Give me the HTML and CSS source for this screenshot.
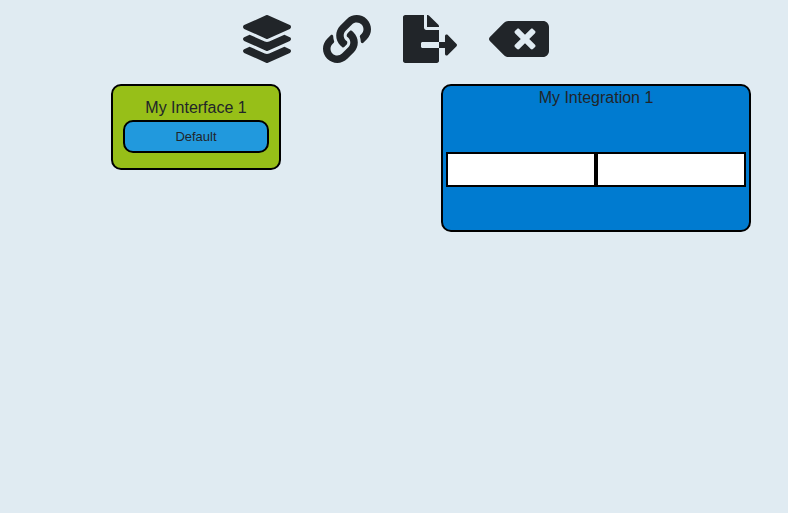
FILE: index.html
```html
<!DOCTYPE html>
<html lang="en">
<head>
<meta charset="utf-8">
<title>Integration editor</title>
<link rel="stylesheet" href="styles.css">
</head>
<body>
<nav class="toolbar">
  <svg class="icon" viewBox="0 0 512 512"><path d="M12.41 148.02l232.94 105.67c6.8 3.09 14.49 3.09 21.29 0l232.94-105.67c16.55-7.51 16.55-32.52 0-40.03L266.65 2.31a25.607 25.607 0 0 0-21.29 0L12.41 107.98c-16.55 7.51-16.55 32.53 0 40.04zm487.18 88.28l-58.09-26.33-161.64 73.27c-7.56 3.43-15.59 5.17-23.86 5.17s-16.29-1.74-23.86-5.17L70.51 209.97l-58.1 26.33c-16.55 7.5-16.55 32.5 0 40l232.94 105.59c6.8 3.08 14.49 3.08 21.29 0L499.59 276.3c16.55-7.5 16.55-32.5 0-40zm0 127.8l-57.87-26.23-161.86 73.37c-7.56 3.43-15.59 5.17-23.86 5.17s-16.29-1.74-23.86-5.17L70.29 337.87 12.41 364.1c-16.55 7.5-16.55 32.5 0 40l232.94 105.59c6.8 3.08 14.49 3.08 21.29 0L499.59 404.1c16.55-7.5 16.55-32.5 0-40z"/></svg>
  <svg class="icon" viewBox="0 0 512 512"><path d="M326.612 185.391c59.747 59.809 58.927 155.698.36 214.59-.11.12-.24.25-.36.37l-67.2 67.2c-59.27 59.27-155.699 59.262-214.96 0-59.27-59.26-59.27-155.7 0-214.96l37.106-37.106c9.84-9.84 26.786-3.3 27.294 10.606.648 17.722 3.826 35.527 9.69 52.721 1.986 5.822.567 12.262-3.783 16.612l-13.087 13.087c-28.026 28.026-28.905 73.66-1.155 101.96 28.024 28.579 74.086 28.749 102.325.51l67.2-67.19c28.191-28.191 28.073-73.757 0-101.83-3.701-3.694-7.429-6.564-10.341-8.569a16.037 16.037 0 0 1-6.947-12.606c-.396-10.567 3.348-21.456 11.698-29.806l21.054-21.055c5.521-5.521 14.182-6.199 20.584-1.731a152.482 152.482 0 0 1 20.522 17.197zM467.547 44.449c-59.261-59.262-155.69-59.27-214.96 0l-67.2 67.2c-.12.12-.25.25-.36.37-58.566 58.892-59.387 154.781.36 214.59a152.454 152.454 0 0 0 20.521 17.196c6.402 4.468 15.064 3.789 20.584-1.731l21.054-21.055c8.35-8.35 12.094-19.239 11.698-29.806a16.037 16.037 0 0 0-6.947-12.606c-2.912-2.005-6.64-4.875-10.341-8.569-28.073-28.073-28.191-73.639 0-101.83l67.2-67.19c28.239-28.239 74.3-28.069 102.325.51 27.75 28.3 26.872 73.934-1.155 101.96l-13.087 13.087c-4.35 4.35-5.769 10.79-3.783 16.612 5.864 17.194 9.042 34.999 9.69 52.721.509 13.906 17.454 20.446 27.294 10.606l37.106-37.106c59.271-59.259 59.271-155.699.001-214.959z"/></svg>
  <svg class="icon icon-export" viewBox="0 0 576 512"><path d="M384 121.9c0-6.3-2.5-12.4-7-16.9L279.1 7c-4.5-4.5-10.6-7-17-7H256v128h128zM571 308l-95.7-96.4c-10.1-10.1-27.4-3-27.4 11.3V288h-64v64h64v65.2c0 14.3 17.3 21.4 27.4 11.3L571 332c6.6-6.6 6.6-17.4 0-24zm-379 28v-32c0-8.8 7.2-16 16-16h176V160H248c-13.2 0-24-10.8-24-24V0H24C10.7 0 0 10.7 0 24v464c0 13.3 10.7 24 24 24h336c13.3 0 24-10.7 24-24V352H208c-8.8 0-16-7.2-16-16z"/></svg>
  <svg class="icon icon-delete" viewBox="0 0 640 512"><path d="M576 64H205.26A63.97 63.97 0 0 0 160 82.75L9.37 233.37c-12.5 12.5-12.5 32.76 0 45.25L160 429.25c12 12 28.28 18.75 45.25 18.75H576c35.35 0 64-28.65 64-64V128c0-35.35-28.65-64-64-64zm-84.69 254.06c6.25 6.25 6.25 16.38 0 22.63l-22.62 22.62c-6.25 6.25-16.38 6.25-22.63 0L384 301.25l-62.06 62.06c-6.25 6.25-16.38 6.25-22.63 0l-22.62-22.62c-6.25-6.25-6.25-16.38 0-22.63L338.75 256l-62.06-62.06c-6.25-6.25-6.25-16.38 0-22.63l22.62-22.62c6.25-6.25 16.38-6.25 22.63 0L384 210.75l62.06-62.06c6.25-6.25 16.38-6.25 22.63 0l22.62 22.62c6.25 6.25 6.25 16.38 0 22.63L429.25 256l62.06 62.06z"/></svg>
</nav>
<main class="board">
  <section class="node interface">
    <div class="title">My Interface 1</div>
    <div class="variant">Default</div>
  </section>
  <section class="node integration">
    <div class="title">My Integration 1</div>
    <div class="slots">
      <div class="slot"></div>
      <div class="slot"></div>
    </div>
  </section>
</main>
</body>
</html>
```
FILE: styles.css
```css
* {
  box-sizing: border-box;
}

body {
  margin: 0;
  min-height: 100vh;
  background: #e0ebf2;
  color: #212529;
  font: 16px/24px "Liberation Sans", Arial, sans-serif;
}

.toolbar {
  display: flex;
  gap: 32px;
  padding: 15px 0 0 243px;
}

.icon {
  display: block;
  width: 48px;
  height: 48px;
  fill: #212529;
}

.icon-export {
  width: 54px;
}

.icon-delete {
  width: 60px;
}

.board {
  display: flex;
  align-items: flex-start;
  gap: 160px;
  padding: 21px 0 0 111px;
}

.node {
  border: 2px solid #000;
  border-radius: 10px;
  text-align: center;
}

.interface {
  width: 170px;
  height: 86px;
  padding: 10px;
  background: #97bf18;
}

.variant {
  height: 33px;
  border: 2px solid #000;
  border-radius: 10px;
  background: #2199dd;
  font-size: 13px;
  line-height: 29px;
}

.integration {
  width: 310px;
  height: 148px;
  padding: 0 3px;
  background: #007bd0;
}

.slots {
  display: flex;
  margin-top: 42px;
}

.slot {
  flex: 1;
  height: 35px;
  border: 2px solid #000;
  background: #fff;
}
```
